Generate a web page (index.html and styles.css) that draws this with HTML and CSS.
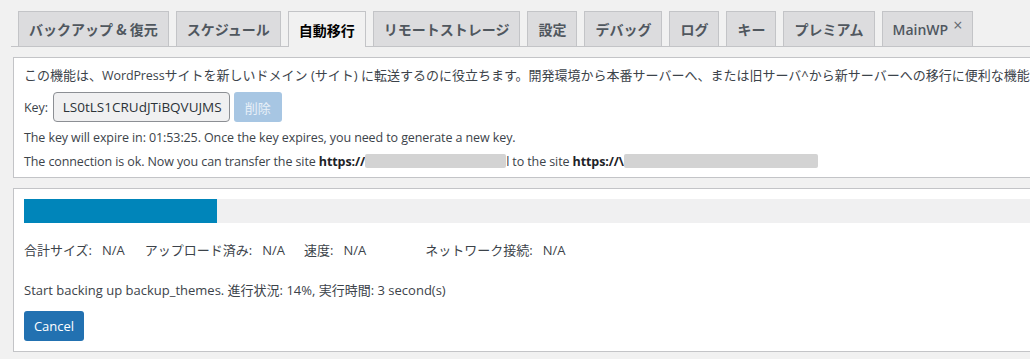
FILE: index.html
```html
<!DOCTYPE html>
<html lang="ja">
<head>
<meta charset="utf-8">
<link rel="stylesheet" href="styles.css">
</head>
<body>
<div class="page">
  <nav class="tabs">
    <span class="tab">バックアップ &amp; 復元</span>
    <span class="tab">スケジュール</span>
    <span class="tab active">自動移行</span>
    <span class="tab">リモートストレージ</span>
    <span class="tab">設定</span>
    <span class="tab">デバッグ</span>
    <span class="tab">ログ</span>
    <span class="tab">キー</span>
    <span class="tab">プレミアム</span>
    <span class="tab tab-mainwp">MainWP <span class="close">×</span></span>
  </nav>

  <section class="panel panel-info">
    <p class="line">この機能は、<span class="en">WordPress</span>サイトを新しいドメイン (サイト) に転送するのに役立ちます。開発環境から本番サーバーへ、または旧サーバ^から新サーバーへの移行に便利な機能です。</p>
    <div class="key-row">
      <span class="key-label en">Key:</span>
      <span class="key-input">LS0tLS1CRUdJTiBQVUJMS</span>
      <span class="btn btn-disabled">削除</span>
    </div>
    <p class="line en">The key will expire in: 01:53:25. Once the key expires, you need to generate a new key.</p>
    <p class="line en">The connection is ok. Now you can transfer the site <b>https://</b><span class="redact r1"></span>l to the site <b>https://\</b><span class="redact r2"></span></p>
  </section>

  <section class="panel panel-progress">
    <div class="bar"><div class="bar-fill" style="width:193px"></div></div>
    <div class="stats">
      <span class="stat s1">合計サイズ:<span class="val">N/A</span></span>
      <span class="stat s2">アップロード済み:<span class="val">N/A</span></span>
      <span class="stat s3">速度:<span class="val">N/A</span></span>
      <span class="stat s4">ネットワーク接続:<span class="val">N/A</span></span>
    </div>
    <p class="line status">Start backing up backup_themes. 進行状況: 14%, 実行時間: 3 second(s)</p>
    <span class="btn btn-primary">Cancel</span>
  </section>
</div>
</body>
</html>
```

FILE: styles.css
```css
html, body {
  margin: 0;
  padding: 0;
}
body {
  background: #f1f1f1;
  color: #3c434a;
  font-family: "Open Sans", "Noto Sans CJK JP", sans-serif;
  font-size: 13px;
  overflow: hidden;
  width: 1030px;
  height: 359px;
}
.page {
  width: 1200px;
  padding-left: 11px;
}
.tabs {
  display: flex;
  gap: 7px;
  padding: 11px 0 0 7px;
  border-bottom: 1px solid #c3c4c7;
  height: 35px;
  box-sizing: content-box;
}
.tab {
  display: flex;
  align-items: center;
  height: 34px;
  padding: 0 10px;
  border: 1px solid #c3c4c7;
  border-bottom: none;
  background: #dcdcde;
  color: #50575e;
  font-family: "Noto Sans CJK JP", sans-serif;
  font-weight: 700;
  font-size: 14px;
  white-space: nowrap;
}
.tab.active {
  background: #f1f1f1;
  color: #000;
  height: 35px;
  margin-bottom: -1px;
}
.tab-mainwp {
  font-family: "Open Sans", sans-serif;
  font-weight: 600;
}
.close {
  font-weight: 400;
  font-size: 16px;
  margin-left: 5px;
  position: relative;
  top: -4px;
  color: #646970;
}
.panel {
  margin-left: 2px;
  background: #fff;
  border: 1px solid #c3c4c7;
  padding-left: 10px;
}
.panel-info {
  margin-top: 10px;
  padding-top: 5px;
  padding-bottom: 3px;
}
.line {
  margin: 0;
  line-height: 24px;
  white-space: nowrap;
}
.en {
  font-size: 12.5px;
  letter-spacing: -0.1px;
}
.panel-info .line:first-child {
  margin-bottom: 4px;
}
.key-row {
  display: flex;
  align-items: center;
  gap: 4px;
  height: 30px;
  margin-bottom: 4px;
}
.key-label {
  margin-right: 1px;
}
.key-input {
  box-sizing: border-box;
  display: flex;
  align-items: center;
  height: 30px;
  width: 177px;
  padding: 0 9px;
  border: 1px solid #8c8f94;
  border-radius: 4px;
  background: #f0f0f1;
  color: #2c3338;
  font-size: 13.5px;
}
.btn {
  box-sizing: border-box;
  display: inline-flex;
  align-items: center;
  justify-content: center;
  height: 30px;
  padding: 0 10px;
  border-radius: 3px;
  font-size: 13px;
}
.btn-disabled {
  width: 48px;
  background: #a7c6e3;
  color: #e8f0f8;
}
b {
  font-weight: 700;
  color: #1d2327;
}
.redact {
  display: inline-block;
  height: 14px;
  background: #d3d3d3;
  vertical-align: -2px;
  border-radius: 2px;
}
.r1 { width: 141px; }
.r2 { width: 194px; }
.panel-progress {
  margin-top: 10px;
  padding-top: 10px;
  padding-bottom: 10px;
}
.bar {
  height: 24px;
  background: #f0f0f1;
}
.bar-fill {
  height: 24px;
  background: #0085ba;
}
.stats {
  display: flex;
  line-height: 24px;
  margin-top: 15px;
  white-space: nowrap;
}
.val {
  margin-left: 10px;
}
.s1 { margin-right: 20px; }
.s2 { margin-right: 19px; }
.s3 { margin-right: 59px; }
.status {
  margin-top: 16px;
  margin-bottom: 9px;
}
.btn-primary {
  width: 60px;
  background: #2271b1;
  color: #fff;
}
```
